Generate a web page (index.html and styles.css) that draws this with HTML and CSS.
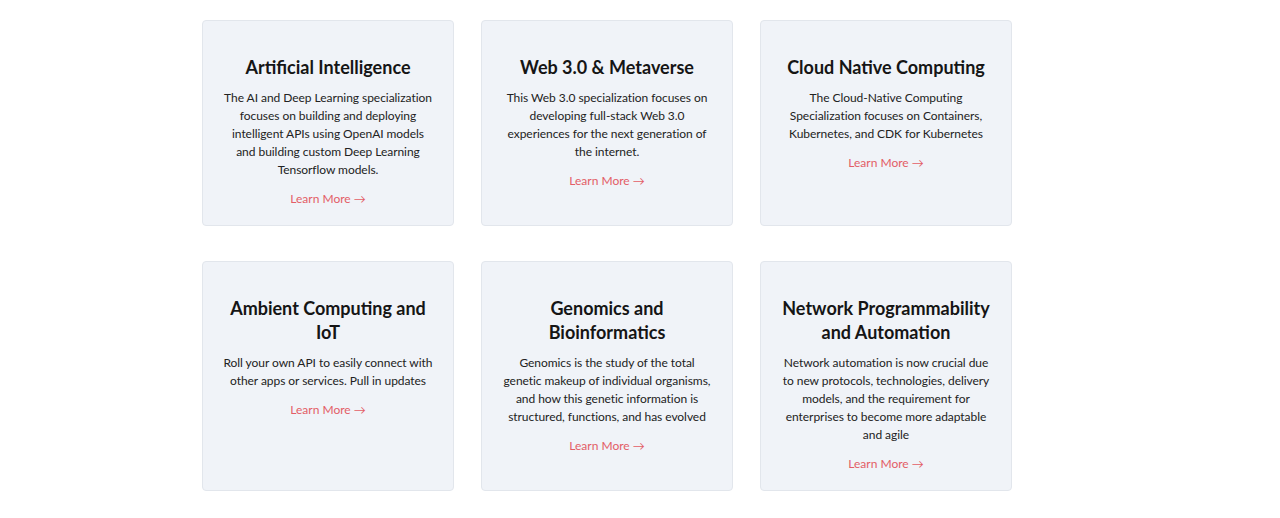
FILE: index.html
```html
<!DOCTYPE html>
<html lang="en">
<head>
<meta charset="utf-8">
<title>Specializations</title>
<link rel="stylesheet" href="styles.css">
</head>
<body>
<main class="page">
  <section class="grid">
    <article class="card">
      <h2 class="card-title">Artificial Intelligence</h2>
      <p class="card-text">The AI and Deep Learning specialization focuses on building and deploying intelligent APIs using OpenAI models and building custom Deep Learning Tensorflow models.</p>
      <a class="card-link" href="#">Learn More →</a>
    </article>
    <article class="card">
      <h2 class="card-title">Web 3.0 &amp; Metaverse</h2>
      <p class="card-text">This Web 3.0 specialization focuses on developing full-stack Web 3.0 experiences for the next generation of the internet.</p>
      <a class="card-link" href="#">Learn More →</a>
    </article>
    <article class="card">
      <h2 class="card-title">Cloud Native Computing</h2>
      <p class="card-text">The Cloud-Native Computing Specialization focuses on Containers, Kubernetes, and CDK for Kubernetes</p>
      <a class="card-link" href="#">Learn More →</a>
    </article>
    <article class="card">
      <h2 class="card-title">Ambient Computing and IoT</h2>
      <p class="card-text">Roll your own API to easily connect with other apps or services. Pull in updates</p>
      <a class="card-link" href="#">Learn More →</a>
    </article>
    <article class="card">
      <h2 class="card-title">Genomics and Bioinformatics</h2>
      <p class="card-text">Genomics is the study of the total genetic makeup of individual organisms, and how this genetic information is structured, functions, and has evolved</p>
      <a class="card-link" href="#">Learn More →</a>
    </article>
    <article class="card">
      <h2 class="card-title">Network Programmability and Automation</h2>
      <p class="card-text">Network automation is now crucial due to new protocols, technologies, delivery models, and the requirement for enterprises to become more adaptable and agile</p>
      <a class="card-link" href="#">Learn More →</a>
    </article>
  </section>
</main>
</body>
</html>
```
FILE: styles.css
```css
html, body {
  margin: 0;
  padding: 0;
  background: #ffffff;
}
body {
  font-family: Lato, "Open Sans", sans-serif;
  color: #222;
}
.page {
  padding: 20px 0 0 202px;
}
.grid {
  width: 810px;
  display: grid;
  grid-template-columns: repeat(3, 252px);
  column-gap: 27px;
  row-gap: 35px;
}
.card {
  background: #f0f3f8;
  border: 1px solid #e2e6ec;
  border-radius: 4px;
  padding: 34px 19px 17px;
  text-align: center;
  display: flex;
  flex-direction: column;
  align-items: center;
}
.card-title {
  margin: 0 0 10px;
  font-size: 18px;
  line-height: 24px;
  font-weight: 700;
  color: #151515;
}
.card-text {
  margin: 0 0 11px;
  font-size: 12px;
  line-height: 18px;
  letter-spacing: -0.05px;
  color: #222;
}
.card-link {
  font-size: 12px;
  line-height: 18px;
  color: #e35d66;
  text-decoration: none;
}
```
